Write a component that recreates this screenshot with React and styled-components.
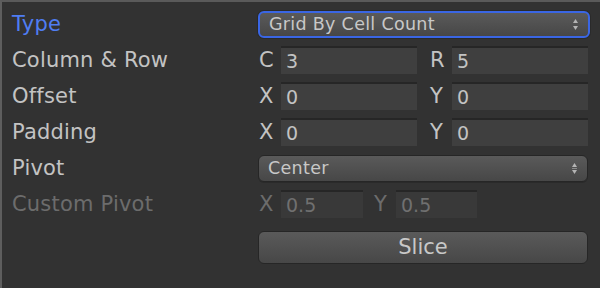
import React from "react"
import styled, { createGlobalStyle } from "styled-components"

const GlobalStyle = createGlobalStyle`
  html, body {
    margin: 0;
    padding: 0;
    background: #323232;
  }
  body {
    font-family: "DejaVu Sans", "Liberation Sans", sans-serif;
  }
`

const Panel = styled.div`
  width: 600px;
  height: 288px;
  box-sizing: border-box;
  background: #323232;
  border-top: 2px solid #5a5a5a;
  border-left: 2px solid #5e5e5e;
  padding: 4px 10px 0 10px;
  display: flex;
  flex-direction: column;
`

const Row = styled.div`
  display: flex;
  align-items: center;
  height: 36px;
  margin-top: ${props => props.gap || 0}px;
`

const Label = styled.div`
  width: 246px;
  flex-shrink: 0;
  font-size: 21px;
  letter-spacing: 0.2px;
  color: ${props =>
    props.focus ? "#4f7df2" : props.disabled ? "#6c6c6c" : "#c3c3c3"};
`

const Controls = styled.div`
  flex: 1;
  display: flex;
  gap: ${props => props.gap || 12}px;
  padding-right: 2px;
`

const Pair = styled.div`
  display: flex;
  align-items: center;
  flex: ${props => (props.width ? "none" : 1)};
  width: ${props => (props.width ? `${props.width}px` : "auto")};
`

const Axis = styled.span`
  width: 23px;
  flex-shrink: 0;
  font-size: 21px;
  color: ${props => (props.disabled ? "#6c6c6c" : "#c3c3c3")};
  padding-left: 1px;
  box-sizing: border-box;
`

const Field = styled.div`
  flex: 1;
  height: 28px;
  box-sizing: border-box;
  background: ${props => (props.disabled ? "#393939" : "#3f3f3f")};
  border-top: 2px solid #262626;
  padding-left: 5px;
  font-size: 19px;
  line-height: 26px;
  color: ${props => (props.disabled ? "#707070" : "#c3c3c3")};
`

const Dropdown = styled.div`
  flex: 1;
  height: 27px;
  box-sizing: border-box;
  display: flex;
  align-items: center;
  justify-content: space-between;
  padding: 0 9px 0 9px;
  border-radius: 6px;
  background: linear-gradient(#5a5a5a, #474747);
  border: ${props => (props.focus ? "2px solid #3a66e4" : "1px solid #262626")};
  box-shadow: ${props =>
    props.focus ? "0 0 0 1px #2a2a2a" : "0 1px 0 #2a2a2a"};
  font-size: 17.5px;
  letter-spacing: 0.3px;
  color: #c8c8c8;
  margin-right: ${props => (props.focus ? 0 : 2)}px;
`

const Button = styled.div`
  flex: 1;
  height: 33px;
  box-sizing: border-box;
  border-radius: 6px;
  border: 1px solid #262626;
  background: linear-gradient(#5a5a5a, #474747);
  display: flex;
  align-items: center;
  justify-content: center;
  font-size: 21px;
  color: #c8c8c8;
  margin-right: 2px;
`

const Arrows = ({ bars }) => (
  <svg width="7" height="13" viewBox="0 0 7 13">
    <path d="M3.5 1 L6 5 L1 5 Z" fill="#b4b4b4" />
    <path d="M3.5 12 L6 8 L1 8 Z" fill="#b4b4b4" />
    {bars && <rect x="1" y="6" width="5" height="1" fill="#8a8a8a" />}
  </svg>
)

export default function App() {
  return (
    <>
      <GlobalStyle />
      <Panel>
        <Row>
          <Label focus>Type</Label>
          <Dropdown focus>
            <span>Grid By Cell Count</span>
            <Arrows />
          </Dropdown>
        </Row>
        <Row>
          <Label>Column &amp; Row</Label>
          <Controls>
            <Pair>
              <Axis>C</Axis>
              <Field>3</Field>
            </Pair>
            <Pair>
              <Axis>R</Axis>
              <Field>5</Field>
            </Pair>
          </Controls>
        </Row>
        <Row>
          <Label>Offset</Label>
          <Controls>
            <Pair>
              <Axis>X</Axis>
              <Field>0</Field>
            </Pair>
            <Pair>
              <Axis>Y</Axis>
              <Field>0</Field>
            </Pair>
          </Controls>
        </Row>
        <Row>
          <Label>Padding</Label>
          <Controls>
            <Pair>
              <Axis>X</Axis>
              <Field>0</Field>
            </Pair>
            <Pair>
              <Axis>Y</Axis>
              <Field>0</Field>
            </Pair>
          </Controls>
        </Row>
        <Row>
          <Label>Pivot</Label>
          <Dropdown>
            <span>Center</span>
            <Arrows bars />
          </Dropdown>
        </Row>
        <Row>
          <Label disabled>Custom Pivot</Label>
          <Controls gap={10}>
            <Pair width={105}>
              <Axis disabled>X</Axis>
              <Field disabled>0.5</Field>
            </Pair>
            <Pair width={104}>
              <Axis disabled>Y</Axis>
              <Field disabled>0.5</Field>
            </Pair>
          </Controls>
        </Row>
        <Row gap={7}>
          <Label />
          <Button>Slice</Button>
        </Row>
      </Panel>
    </>
  )
}
